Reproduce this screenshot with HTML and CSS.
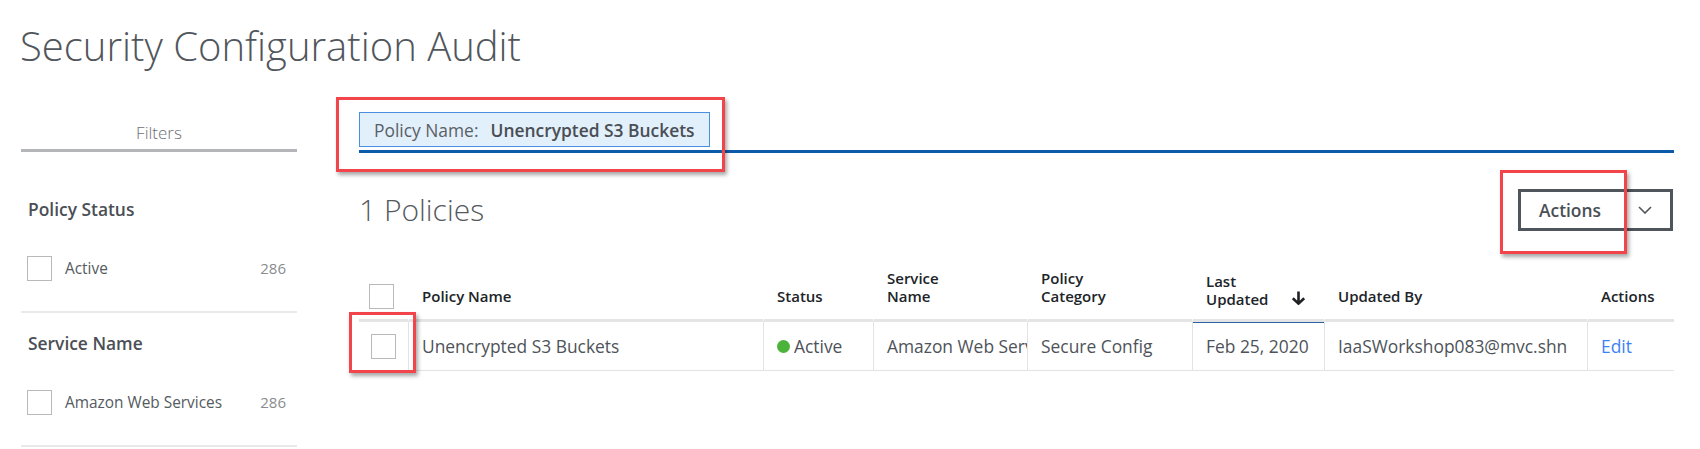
FILE: index.html
```html
<!DOCTYPE html>
<html lang="en">
<head>
<meta charset="utf-8">
<title>Security Configuration Audit</title>
<link rel="stylesheet" href="styles.css">
</head>
<body>
<div class="page">
  <h1 class="title">Security Configuration Audit</h1>
  <div class="layout">
    <aside class="filters">
      <div class="filters-tab">Filters</div>
      <section class="facet facet-first">
        <h2 class="facet-title">Policy Status</h2>
        <label class="facet-item">
          <span class="box"></span>
          <span class="facet-label">Active</span>
          <span class="facet-count">286</span>
        </label>
      </section>
      <section class="facet">
        <h2 class="facet-title">Service Name</h2>
        <label class="facet-item">
          <span class="box"></span>
          <span class="facet-label">Amazon Web Services</span>
          <span class="facet-count">286</span>
        </label>
      </section>
    </aside>

    <main class="content">
      <div class="filter-bar">
        <div class="chip-wrap annotated">
          <div class="chip"><span class="chip-key">Policy Name:</span><span class="chip-value">Unencrypted S3 Buckets</span></div>
          <span class="mark mark-chip"></span>
        </div>
      </div>

      <div class="toolbar">
        <div class="count">1 Policies</div>
        <div class="actions-wrap annotated">
          <div class="actions-btn">
            <span class="actions-label">Actions</span>
            <span class="actions-caret">
              <svg width="14" height="8" viewBox="0 0 14 8"><path d="M1 1 L7 7 L13 1" fill="none" stroke="#50555b" stroke-width="1.6"/></svg>
            </span>
          </div>
          <span class="mark mark-actions"></span>
        </div>
      </div>

      <div class="grid">
        <div class="th th-check"><span class="box"></span></div>
        <div class="th bl">Policy Name</div>
        <div class="th bl">Status</div>
        <div class="th bl">Service<br>Name</div>
        <div class="th bl">Policy<br>Category</div>
        <div class="th bl th-sorted"><span>Last<br>Updated</span>
          <svg class="sort" width="15" height="14" viewBox="0 0 15 14"><path d="M7.5 0.5 V12.5 M1.8 7.2 L7.5 12.6 L13.2 7.2" fill="none" stroke="#1e2226" stroke-width="2.6"/></svg>
        </div>
        <div class="th bl">Updated By</div>
        <div class="th bl">Actions</div>

        <div class="td td-check annotated"><span class="box"></span><span class="mark mark-row"></span></div>
        <div class="td bl">Unencrypted S3 Buckets</div>
        <div class="td bl"><span class="dot"></span>Active</div>
        <div class="td bl clip">Amazon Web Services</div>
        <div class="td bl">Secure Config</div>
        <div class="td bl td-sorted">Feb 25, 2020</div>
        <div class="td bl">IaaSWorkshop083@mvc.shn</div>
        <div class="td bl"><a class="edit" href="#">Edit</a></div>
      </div>
    </main>
  </div>
</div>
</body>
</html>
```

FILE: styles.css
```css
* { box-sizing: border-box; }

html, body {
  margin: 0;
  padding: 0;
  background: #ffffff;
}

body {
  font-family: "Open Sans", "Noto Sans", "Liberation Sans", sans-serif;
  color: #4e5359;
}

.page {
  padding: 21px 0 0 20px;
}

.title {
  margin: 0;
  font-size: 40px;
  line-height: 50px;
  font-weight: 300;
  color: #51565c;
  letter-spacing: 0;
}

.layout {
  display: flex;
  margin-top: 41px;
}

/* ---------- filters sidebar ---------- */
.filters {
  width: 276px;
  margin-left: 1px;
  flex: none;
}

.filters-tab {
  padding: 10px 0 5px;
  line-height: 22px;
  font-size: 17px;
  font-weight: 300;
  color: #6d7176;
  text-align: center;
  border-bottom: 3px solid #b3b5b8;
}

.facet {
  padding: 18px 11px 31px 7px;
  border-bottom: 2px solid #e9e9e9;
}

.facet-first {
  margin-top: 27px;
}

.facet-title {
  margin: 0 0 35px;
  font-size: 17.4px;
  line-height: 24px;
  font-weight: 600;
  color: #4b4f55;
}

.facet-item {
  display: flex;
  align-items: center;
  height: 24px;
  margin-left: -1px;
}

.box {
  display: inline-block;
  width: 25px;
  height: 25px;
  border: 1px solid #b9b9b9;
  background: #fff;
  flex: none;
}

.facet-label {
  margin-left: 13px;
  font-size: 15.4px;
  color: #555b61;
}

.facet-count {
  margin-left: auto;
  font-size: 15px;
  color: #898c90;
}

/* ---------- main ---------- */
.content {
  width: 1315px;
  margin-left: 62px;
  flex: none;
}

.filter-bar {
  padding-bottom: 3px;
  border-bottom: 3px solid #0c5ba9;
}

.annotated {
  position: relative;
}

.chip-wrap {
  display: inline-block;
  vertical-align: top;
}

.chip {
  display: flex;
  align-items: center;
  height: 35px;
  padding: 0 14px;
  background: #e2f0fc;
  border: 1px solid #4a8ee2;
  font-size: 17.4px;
}

.chip-key {
  color: #5a5f65;
}

.chip-value {
  margin-left: 12px;
  font-weight: 600;
  color: #4a4e54;
}

.mark {
  position: absolute;
  border: 3px solid #f1444b;
  box-shadow: 2px 3px 4px rgba(0, 0, 0, 0.35);
  pointer-events: none;
  z-index: 2;
}

.mark-chip {
  left: -23px;
  top: -15px;
  width: 389px;
  height: 75px;
}

.toolbar {
  display: flex;
  align-items: center;
  justify-content: space-between;
  margin-top: 36px;
}

.count {
  font-size: 30px;
  font-weight: 300;
  color: #555a60;
  line-height: 40px;
}

.actions-btn {
  display: flex;
  align-items: center;
  height: 42px;
  border: 3px solid #50555b;
  background: #fff;
}

.actions-label {
  padding: 0 18px;
  font-size: 17.4px;
  font-weight: 600;
  color: #4a4f55;
}

.actions-caret {
  width: 51px;
  display: flex;
  align-items: center;
  justify-content: center;
}

.actions-wrap {
  margin-right: 1px;
}

.mark-actions {
  left: -18px;
  top: -19px;
  width: 127px;
  height: 84px;
}

/* ---------- table ---------- */
.grid {
  display: grid;
  grid-template-columns: 49px 355px 110px 154px 165px 132px 263px 87px;
  margin-top: 34px;
}

.th {
  display: flex;
  align-items: flex-end;
  padding: 4px 13px 14px;
  font-size: 15px;
  line-height: 18px;
  font-weight: 600;
  color: #202428;
  border-bottom: 3px solid #e4e4e4;
}

.th.bl {
  border-left: 1px solid transparent;
}

.th-check {
  padding: 0 0 10px 10px;
}

.th-sorted {
  padding-bottom: 11px;
  padding-right: 18px;
}

.th-sorted .sort {
  margin-left: auto;
  margin-bottom: 3px;
}

.td {
  display: flex;
  align-items: center;
  height: 49px;
  padding: 0 13px;
  font-size: 17.4px;
  color: #4e5359;
  white-space: nowrap;
  overflow: hidden;
  border-bottom: 1px solid #e3e3e3;
}

.td.clip {
  padding-right: 0;
}

.td.bl {
  border-left: 1px solid #e3e3e3;
}

.td-check {
  overflow: visible;
  padding: 0 0 0 12px;
}

.td-sorted {
  box-shadow: inset 0 1px 0 #2a61a5;
}

.dot {
  width: 13px;
  height: 13px;
  border-radius: 50%;
  background: #4bb33a;
  margin-right: 4px;
  flex: none;
}

.edit {
  color: #3b82f4;
  text-decoration: none;
}

.mark-row {
  left: -10px;
  top: -10px;
  width: 67px;
  height: 61px;
}
```
